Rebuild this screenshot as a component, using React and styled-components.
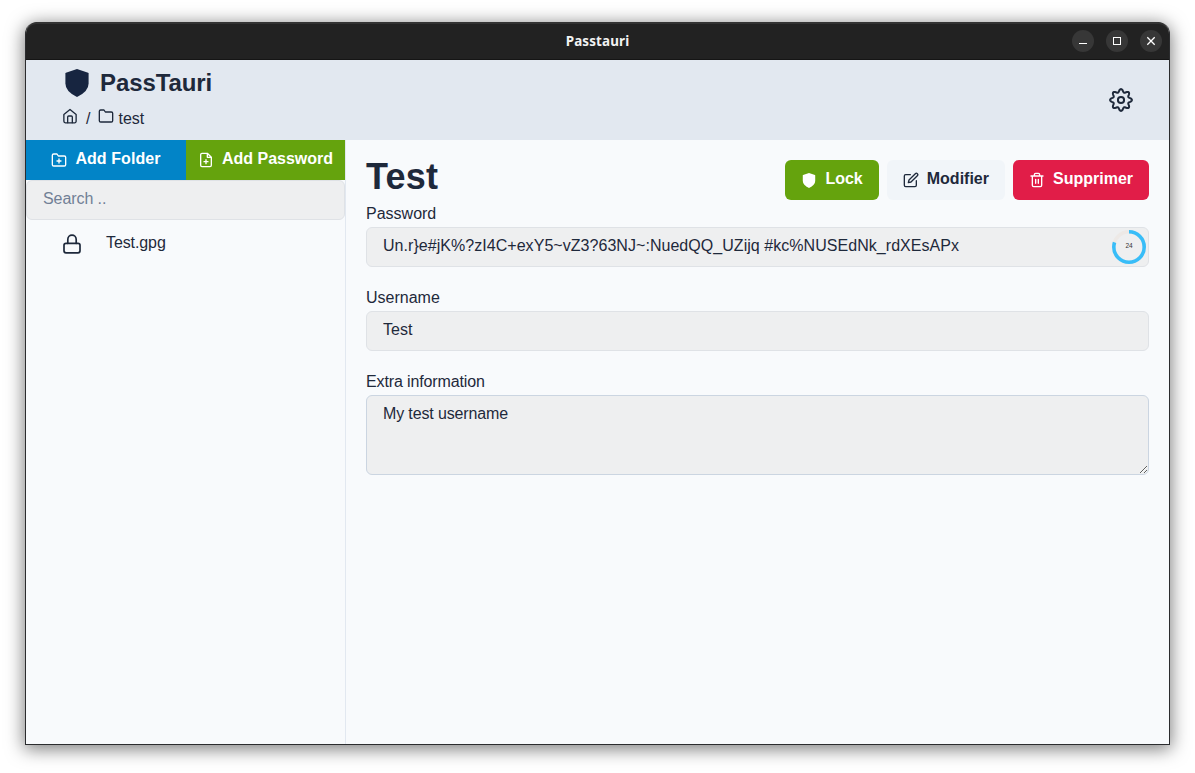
import React from "react";
import styled, { createGlobalStyle } from "styled-components";

const GlobalStyle = createGlobalStyle`
  *, *::before, *::after { box-sizing: border-box; }
  body {
    margin: 0;
    background: #fff;
    color: #1e293b;
    font: 16px/24px "Liberation Sans", Arial, sans-serif;
  }
  svg { display: block; flex: none; }
`;

const Desktop = styled.div`
  height: 773px;
  padding: 22px 25px 28px;
  overflow: hidden;
`;

const Window = styled.div`
  display: flex;
  flex-direction: column;
  height: 723px;
  border: 1px solid #2b2c2e;
  border-top: 0;
  border-radius: 12px 12px 0 0;
  background: #f8fafc;
  box-shadow: 0 3px 18px 1px rgba(0, 0, 0, 0.52);
  overflow: hidden;
`;

const TitleBar = styled.div`
  display: grid;
  grid-template-columns: 1fr auto 1fr;
  align-items: center;
  flex: none;
  height: 38px;
  padding: 0 7px;
  background: #222;
  border-bottom: 1px solid #151515;
  border-radius: 11px 11px 0 0;
  box-shadow: inset 0 2px 0 #333;
`;

const WindowTitle = styled.div`
  grid-column: 2;
  color: #f2f2f2;
  font: 700 13.4px/20px "Noto Sans", sans-serif;
  letter-spacing: 0.15px;
`;

const WindowControls = styled.div`
  display: flex;
  justify-content: flex-end;
  gap: 12px;
`;

const ControlButton = styled.button`
  width: 22px;
  height: 22px;
  padding: 0;
  border: 0;
  border-radius: 50%;
  background: #373737;
  color: #fff;
`;

const Header = styled.header`
  display: flex;
  align-items: center;
  justify-content: space-between;
  flex: none;
  height: 80px;
  padding: 0 36px;
  background: #e2e8f0;
`;

const Brand = styled.div`
  display: flex;
  flex-direction: column;
  height: 80px;
  padding-top: 6px;
`;

const BrandRow = styled.div`
  display: flex;
  align-items: center;
  gap: 11px;
  height: 34px;
  padding-left: 3px;
`;

const BrandName = styled.h1`
  margin: 0;
  font-size: 24px;
  line-height: 32px;
  padding-bottom: 1px;
  letter-spacing: -0.1px;
`;

const Breadcrumb = styled.nav`
  display: flex;
  align-items: flex-start;
  height: 32px;
  padding-top: 8px;
`;

const Crumb = styled.span`
  line-height: 22px;
  margin: 0 ${(p) => p.$right || 0} 0 ${(p) => p.$left || 0};
`;

const Body = styled.div`
  display: flex;
  flex: 1;
`;

const Sidebar = styled.aside`
  width: 320px;
  border-right: 1px solid #e2e8f0;
`;

const SidebarActions = styled.div`
  display: grid;
  grid-template-columns: 160px 159px;
`;

const Button = styled.button`
  display: flex;
  align-items: center;
  justify-content: center;
  gap: 8px;
  height: 40px;
  padding: 0 16px;
  border: 0;
  border-radius: ${(p) => (p.$square ? "0" : "6px")};
  background: ${(p) => p.$bg};
  color: ${(p) => p.$color || "#fff"};
  font: 700 16px/24px "Liberation Sans", Arial, sans-serif;
  white-space: nowrap;
  span { padding-bottom: 3px; letter-spacing: ${(p) => p.$spacing || "0"}; }
`;

const Input = styled.input`
  display: block;
  width: 100%;
  height: 40px;
  padding: 0 16px 3px;
  border: 1px solid #dfe2e6;
  border-radius: 6px;
  outline: 0;
  background: #eeeff0;
  color: #1e293b;
  font: inherit;
  letter-spacing: ${(p) => p.$spacing || "0"};
  &::placeholder { color: #718096; opacity: 1; }
`;

const FileRow = styled.div`
  display: flex;
  align-items: center;
  gap: 22px;
  height: 48px;
  padding: 0 34px;
  span { padding-bottom: 2px; letter-spacing: -0.1px; }
`;

const Content = styled.main`
  flex: 1;
  padding: 20px;
`;

const ContentHead = styled.div`
  display: flex;
  justify-content: space-between;
  height: 42px;
`;

const EntryTitle = styled.h2`
  margin: 0;
  font-size: 36px;
  line-height: 34px;
  letter-spacing: 0.2px;
`;

const Actions = styled.div`
  display: flex;
  gap: 8px;
`;

const Field = styled.label`
  display: block;
  margin-bottom: 19px;
`;

const Label = styled.span`
  display: block;
  height: 25px;
  line-height: 23px;
  letter-spacing: ${(p) => p.$spacing || "0"};
`;

const InputWrap = styled.div`
  position: relative;
`;

const Countdown = styled.div`
  position: absolute;
  top: 3px;
  right: 3px;
  width: 34px;
  height: 34px;
  svg { position: absolute; inset: 0; }
  span {
    position: absolute;
    inset: 0 0 2px;
    display: grid;
    place-items: center;
    color: #333;
    font-size: 6.5px;
    line-height: 8px;
  }
`;

const TextArea = styled.textarea`
  display: block;
  width: 100%;
  height: 80px;
  padding: 6px 16px;
  border: 1px solid #cbd5e1;
  border-radius: 6px;
  outline: 0;
  background: #eeeff0;
  color: #1e293b;
  font: inherit;
  letter-spacing: -0.14px;
  resize: vertical;
`;

const Icon = ({ size = 16, stroke = 2, children }) => (
  <svg width={size} height={size} viewBox="0 0 24 24" fill="none" stroke="currentColor"
    strokeWidth={stroke} strokeLinecap="round" strokeLinejoin="round">{children}</svg>
);

const Shield = ({ width, height, color }) => (
  <svg width={width} height={height} viewBox="0 0 24 28" fill={color}>
    <path d="M12 0 23.1 3.7Q23.6 4 23.6 4.6V14.5Q23.6 22.5 12 28Q.4 22.5 .4 14.5V4.6Q.4 4 .9 3.7Z" />
  </svg>
);

const gearPoints = Array.from({ length: 192 }, (_, i) => {
  const a = (i / 192) * Math.PI * 2;
  const c = Math.cos(8 * a);
  const r = 9.4 + (1.5 * Math.tanh(1.8 * c)) / Math.tanh(1.8);
  const t = a - 0.045 * Math.sin(16 * a);
  return `${(12 + r * Math.cos(t)).toFixed(2)} ${(12 + r * Math.sin(t)).toFixed(2)}`;
});

const Gear = () => (
  <Icon size={24}>
    <path d={`M${gearPoints.join("L")}Z`} />
    <circle cx="12" cy="12" r="3.1" />
  </Icon>
);

export default function App() {
  return (
    <>
      <GlobalStyle />
      <Desktop>
        <Window>
          <TitleBar>
            <WindowTitle>Passtauri</WindowTitle>
            <WindowControls>
              <ControlButton aria-label="Minimize">
                <svg width="22" height="22"><path d="M7 13.5h8" stroke="#fff" /></svg>
              </ControlButton>
              <ControlButton aria-label="Maximize">
                <svg width="22" height="22"><rect x="7.5" y="7.5" width="7" height="7" fill="none" stroke="#fff" /></svg>
              </ControlButton>
              <ControlButton aria-label="Close">
                <svg width="22" height="22"><path d="m7.3 7.3 7.4 7.4m0-7.4-7.4 7.4" stroke="#fff" strokeWidth="1.3" /></svg>
              </ControlButton>
            </WindowControls>
          </TitleBar>
          <Header>
            <Brand>
              <BrandRow>
                <Shield width={24} height={28} color="#172540" />
                <BrandName>PassTauri</BrandName>
              </BrandRow>
              <Breadcrumb>
                <Icon>
                  <path d="M2.8 9.8 12 2.3l9.2 7.5V20a2.2 2.2 0 0 1-2.2 2.2H5A2.2 2.2 0 0 1 2.8 20z" />
                  <path d="M8.5 22v-8.4q0-1.6 1.6-1.6h3.8q1.6 0 1.6 1.6V22" />
                </Icon>
                <Crumb $left="8px" $right="8px">/</Crumb>
                <Icon><path d="M22 19a2 2 0 0 1-2 2H4a2 2 0 0 1-2-2V5a2 2 0 0 1 2-2h5l2 3h9a2 2 0 0 1 2 2z" /></Icon>
                <Crumb $left="4px">test</Crumb>
              </Breadcrumb>
            </Brand>
            <Gear />
          </Header>
          <Body>
            <Sidebar>
              <SidebarActions>
                <Button $square $bg="#0284c7" $spacing="0.08px">
                  <Icon>
                    <path d="M22 19a2 2 0 0 1-2 2H4a2 2 0 0 1-2-2V5a2 2 0 0 1 2-2h5l2 3h9a2 2 0 0 1 2 2z" />
                    <path d="M12 10.5v6M9 13.5h6" />
                  </Icon>
                  <span>Add Folder</span>
                </Button>
                <Button $square $bg="#65a30d">
                  <Icon>
                    <path d="M14 2H6a2 2 0 0 0-2 2v16a2 2 0 0 0 2 2h12a2 2 0 0 0 2-2V8zM14 2v6h6M12 11.5v6M9 14.5h6" />
                  </Icon>
                  <span>Add Password</span>
                </Button>
              </SidebarActions>
              <Input placeholder="Search .." $spacing="-0.08px" />
              <FileRow>
                <Icon size={24} stroke={1.7}>
                  <rect x="4" y="11.3" width="16" height="9.5" rx="2" />
                  <path d="M7.8 11.3V7.4a4.2 4.2 0 0 1 8.4 0v3.9" />
                </Icon>
                <span>Test.gpg</span>
              </FileRow>
            </Sidebar>
            <Content>
              <ContentHead>
                <EntryTitle>Test</EntryTitle>
                <Actions>
                  <Button $bg="#65a30d">
                    <Shield width={16} height={15} color="#fff" />
                    <span>Lock</span>
                  </Button>
                  <Button $bg="#f1f5f9" $color="#1e293b">
                    <Icon>
                      <path d="M11 4H4a2 2 0 0 0-2 2v14a2 2 0 0 0 2 2h14a2 2 0 0 0 2-2v-7" />
                      <path d="M18.5 2.5a2.1 2.1 0 0 1 3 3L12 15l-4 1 1-4z" />
                    </Icon>
                    <span>Modifier</span>
                  </Button>
                  <Button $bg="#e11d48">
                    <Icon>
                      <path d="M3 6h18M19 6v14a2 2 0 0 1-2 2H7a2 2 0 0 1-2-2V6m3 0V4a2 2 0 0 1 2-2h4a2 2 0 0 1 2 2v2M10 11v6M14 11v6" />
                    </Icon>
                    <span>Supprimer</span>
                  </Button>
                </Actions>
              </ContentHead>
              <Field>
                <Label>Password</Label>
                <InputWrap>
                  <Input readOnly $spacing="0.045px" value="Un.r}e#jK%?zI4C+exY5~vZ3?63NJ~:NuedQQ_UZijq #kc%NUSEdNk_rdXEsAPx" />
                  <Countdown>
                    <svg width="34" height="34" viewBox="0 0 34 34" fill="none" strokeWidth="3.6">
                      <circle cx="17" cy="17" r="15.2" stroke="#ede9e6" />
                      <circle cx="17" cy="17" r="15.2" stroke="#38bdf8" pathLength="100" strokeDasharray="80 20" transform="rotate(-90 17 17)" />
                    </svg>
                    <span>24</span>
                  </Countdown>
                </InputWrap>
              </Field>
              <Field>
                <Label>Username</Label>
                <Input readOnly value="Test" />
              </Field>
              <Field>
                <Label $spacing="-0.13px">Extra information</Label>
                <TextArea readOnly value="My test username" />
              </Field>
            </Content>
          </Body>
        </Window>
      </Desktop>
    </>
  );
}
